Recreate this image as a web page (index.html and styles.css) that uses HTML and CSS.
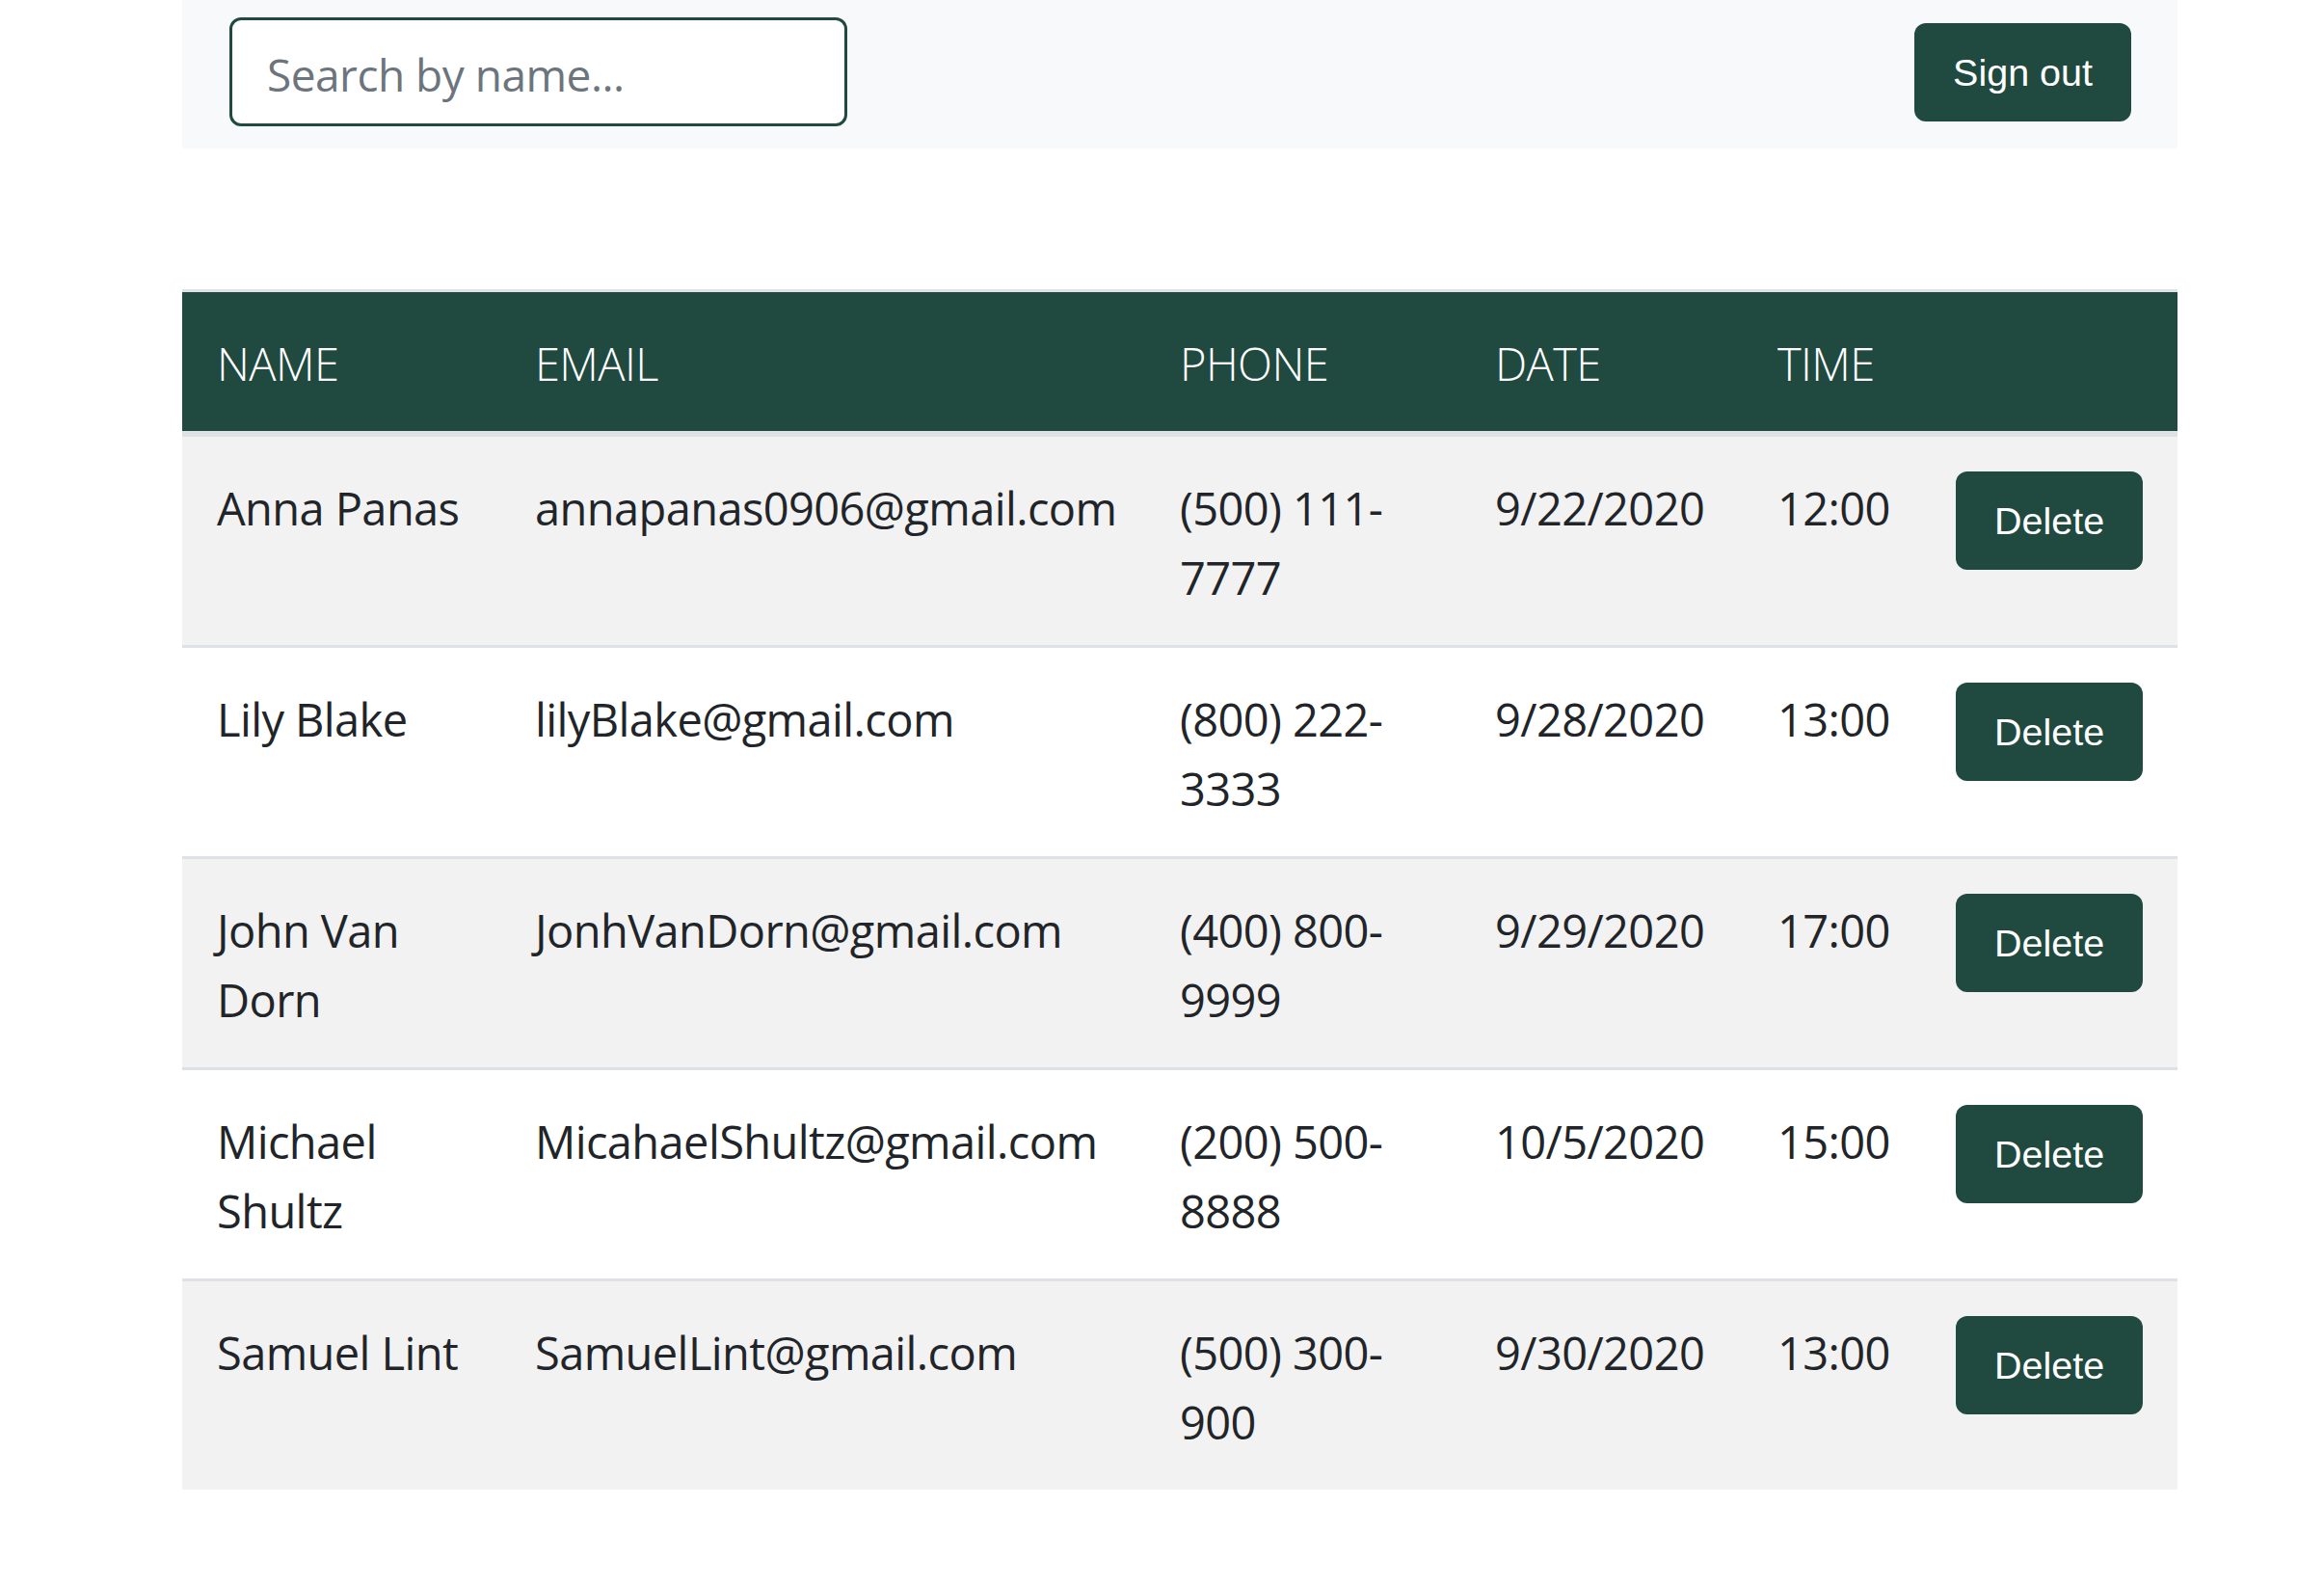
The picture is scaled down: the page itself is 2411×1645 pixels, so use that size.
FILE: index.html
```html
<!DOCTYPE html>
<html lang="en">
<head>
<meta charset="utf-8">
<title>Appointments</title>
<link rel="stylesheet" href="styles.css">
</head>
<body>
<div class="container">
  <nav class="navbar">
    <input class="search" type="text" placeholder="Search by name...">
    <button class="btn" type="button">Sign out</button>
  </nav>

  <table class="table">
    <colgroup>
      <col class="c-name">
      <col class="c-email">
      <col class="c-phone">
      <col class="c-date">
      <col class="c-time">
      <col class="c-action">
    </colgroup>
    <thead>
      <tr>
        <th>NAME</th>
        <th>EMAIL</th>
        <th>PHONE</th>
        <th>DATE</th>
        <th>TIME</th>
        <th></th>
      </tr>
    </thead>
    <tbody>
      <tr class="odd">
        <td>Anna Panas</td>
        <td>annapanas0906@gmail.com</td>
        <td>(500) 111-7777</td>
        <td class="nowrap">9/22/2020</td>
        <td class="nowrap">12:00</td>
        <td class="action"><button class="btn" type="button">Delete</button></td>
      </tr>
      <tr>
        <td>Lily Blake</td>
        <td>lilyBlake@gmail.com</td>
        <td>(800) 222-3333</td>
        <td class="nowrap">9/28/2020</td>
        <td class="nowrap">13:00</td>
        <td class="action"><button class="btn" type="button">Delete</button></td>
      </tr>
      <tr class="odd">
        <td>John Van Dorn</td>
        <td>JonhVanDorn@gmail.com</td>
        <td>(400) 800-9999</td>
        <td class="nowrap">9/29/2020</td>
        <td class="nowrap">17:00</td>
        <td class="action"><button class="btn" type="button">Delete</button></td>
      </tr>
      <tr>
        <td>Michael Shultz</td>
        <td>MicahaelShultz@gmail.com</td>
        <td>(200) 500-8888</td>
        <td class="nowrap">10/5/2020</td>
        <td class="nowrap">15:00</td>
        <td class="action"><button class="btn" type="button">Delete</button></td>
      </tr>
      <tr class="odd">
        <td>Samuel Lint</td>
        <td>SamuelLint@gmail.com</td>
        <td>(500) 300-900</td>
        <td class="nowrap">9/30/2020</td>
        <td class="nowrap">13:00</td>
        <td class="action"><button class="btn" type="button">Delete</button></td>
      </tr>
    </tbody>
  </table>
</div>
</body>
</html>
```

FILE: styles.css
```css
* {
  box-sizing: border-box;
}

html, body {
  margin: 0;
  padding: 0;
  background: #ffffff;
}

body {
  font-family: "Open Sans", "Noto Sans", "DejaVu Sans", sans-serif;
  font-size: 47px;
  letter-spacing: -0.6px;
  line-height: 72px;
  color: #212529;
}

.container {
  width: 2070px;
  margin-left: 189px;
}

.navbar {
  display: flex;
  justify-content: space-between;
  align-items: center;
  background: #f8f9fa;
  padding: 18px 48px 23px 49px;
}

.search {
  width: 641px;
  height: 113px;
  border: 3px solid #204a3f;
  border-radius: 12px;
  padding: 4px 36px 0;
  font-family: "Open Sans", "Noto Sans", sans-serif;
  font-size: 46px;
  letter-spacing: -0.5px;
  color: #495057;
  background: #ffffff;
  outline: none;
}

.search::placeholder {
  color: #6c757d;
  opacity: 1;
}

.btn {
  display: inline-block;
  font-family: "Liberation Sans", Arial, sans-serif;
  font-size: 39.5px;
  letter-spacing: 0;
  line-height: 60px;
  padding: 21px 40px;
  border: 0;
  border-radius: 12px;
  background: #204a3f;
  color: #ffffff;
  cursor: pointer;
}

.table {
  width: 2070px;
  margin-top: 146px;
  border-collapse: collapse;
  table-layout: fixed;
}

.c-name { width: 330px; }
.c-email { width: 669px; }
.c-phone { width: 327px; }
.c-date { width: 293px; }
.c-time { width: 185px; }
.c-action { width: 266px; }

.table th {
  background: #204a3f;
  color: #ffffff;
  font-weight: 300;
  text-align: left;
  padding: 38px 36px 34px;
  border-top: 3px solid #dee2e6;
  border-bottom: 6px solid #dee2e6;
  vertical-align: bottom;
}

.table td {
  padding: 38px 36px 34px;
  border-top: 3px solid #dee2e6;
  vertical-align: top;
  text-align: left;
}

.table td.action {
  padding-top: 36px;
}

.table tr.odd td {
  background: #f2f2f2;
}

.nowrap {
  white-space: nowrap;
}
```
